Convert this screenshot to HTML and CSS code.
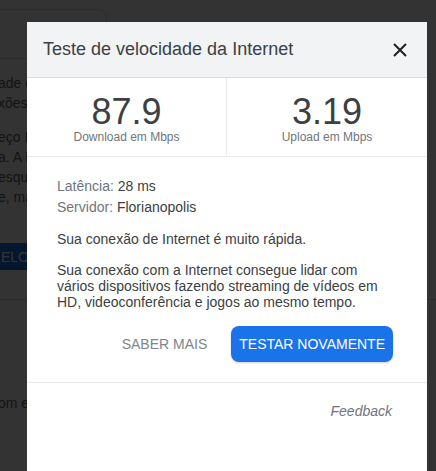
FILE: index.html
```html
<!DOCTYPE html>
<html lang="pt-BR">

<head>
    <meta charset="UTF-8">
    <meta name="viewport" content="width=device-width, initial-scale=1.0">
    <title>Teste de velocidade da Internet</title>
    <link rel="stylesheet" href="styles.css">
</head>

<body>
    <div class="page">
        <div class="search-box"></div>
        <p class="intro">ade da sua conexão em menos de 30 segundos.<br>xões são testadas com servidores próximos.</p>
        <p class="intro">eço IP é compartilhado com o provedor do teste<br>a. A M-Lab conduz o teste e publica todos os<br>esquisa. As informações publicadas incluem<br>e, mas não incluem informações sobre você.</p>
        <button class="run-button">ELOCIDADE</button>
        <div class="page-rule"></div>
        <p class="intro bottom">om este teste</p>
    </div>

    <div class="overlay"></div>

    <div class="dialog">
        <header class="dialog-header">
            <h1>Teste de velocidade da Internet</h1>
            <button class="close-btn" aria-label="Fechar">
                <svg width="14" height="14" viewBox="0 0 14 14">
                    <path d="M1 1 L13 13 M13 1 L1 13" stroke="#202124" stroke-width="2" fill="none" />
                </svg>
            </button>
        </header>

        <div class="stats">
            <div class="stat">
                <div class="stat-value">87.9</div>
                <div class="stat-label">Download em Mbps</div>
            </div>
            <div class="stat">
                <div class="stat-value">3.19</div>
                <div class="stat-label">Upload em Mbps</div>
            </div>
        </div>

        <div class="dialog-body">
            <div class="info-row"><span class="info-label">Latência:</span> 28 ms</div>
            <div class="info-row"><span class="info-label">Servidor:</span> Florianopolis</div>
            <p class="verdict">Sua conexão de Internet é muito rápida.</p>
            <p>Sua conexão com a Internet consegue lidar com vários dispositivos fazendo streaming de vídeos em HD, videoconferência e jogos ao mesmo tempo.</p>

            <div class="actions">
                <button class="text-btn">SABER MAIS</button>
                <button class="primary-btn">TESTAR NOVAMENTE</button>
            </div>
        </div>

        <div class="dialog-footer">
            <a href="#" class="feedback">Feedback</a>
        </div>
    </div>
</body>

</html>
```

FILE: styles.css
```css
html,
body {
    height: 100%;
    overflow: hidden;
}

body {
    font-family: "Liberation Sans", Arial, sans-serif;
    margin: 0;
    padding: 0;
    background-color: #fff;
    color: #3c4043;
}

/* page behind the dialog */
.page {
    margin-left: -2px;
    padding-top: 9px;
    font-size: 14px;
    color: #5f6368;
}

.search-box {
    margin-left: -21px;
    width: 130px;
    height: 50px;
    box-sizing: border-box;
    border: 1px solid #dadce0;
    border-radius: 8px;
}

.intro {
    margin: 14px 0 0;
    line-height: 20px;
    white-space: nowrap;
}

.intro.bottom {
    margin-top: 93px;
}

.run-button {
    display: block;
    margin: 36px 0 0 -10px;
    height: 27px;
    padding: 0 0 0 13px;
    width: 200px;
    text-align: left;
    border: none;
    border-radius: 4px;
    background-color: #1a73e8;
    color: #fff;
    font-family: inherit;
    font-size: 14px;
}

.page-rule {
    margin-top: 29px;
    height: 1px;
    background-color: #dadce0;
}

.overlay {
    position: fixed;
    top: 0;
    left: 0;
    right: 0;
    bottom: 0;
    background-color: rgba(0, 0, 0, 0.8);
}

/* dialog */
.dialog {
    position: fixed;
    top: 22px;
    left: 27px;
    width: 400px;
    bottom: -40px;
    background: #fff;
    display: flex;
    flex-direction: column;
}

.dialog-header {
    height: 55px;
    display: flex;
    align-items: center;
    justify-content: space-between;
    padding: 0 20px 0 16px;
    background-color: #f1f3f4;
    border-bottom: 1px solid #dadce0;
}

.dialog-header h1 {
    margin: 0;
    font-size: 18px;
    font-weight: normal;
    color: #3c4043;
}

.close-btn {
    display: flex;
    padding: 0;
    border: none;
    background: none;
    cursor: pointer;
}

.stats {
    display: grid;
    grid-template-columns: 1fr 1fr;
    border-bottom: 1px solid #ebebeb;
}

.stat {
    padding: 16px 0 12px;
    text-align: center;
}

.stat:first-child {
    border-right: 1px solid #ebebeb;
}

.stat-value {
    font-size: 36px;
    line-height: 36px;
    color: #3c4043;
}

.stat-label {
    font-size: 12px;
    line-height: 14px;
    color: #70757a;
}

.dialog-body {
    padding: 19px 34px 20px 30px;
    font-size: 14px;
    border-bottom: 1px solid #ebebeb;
}

.info-row {
    line-height: 21px;
    color: #3c4043;
}

.info-label {
    color: #70757a;
}

.dialog-body p {
    margin: 15px 0 0;
    line-height: 16px;
    color: #3c4043;
}

.dialog-body .verdict {
    margin-top: 13px;
}

.actions {
    display: flex;
    justify-content: flex-end;
    align-items: center;
    gap: 16px;
    margin-top: 16px;
}

.text-btn,
.primary-btn {
    height: 36px;
    padding: 0 8px;
    border: none;
    font-family: inherit;
    font-size: 14px;
    cursor: pointer;
}

.text-btn {
    background: none;
    color: #80868b;
}

.primary-btn {
    background-color: #1a73e8;
    color: #fff;
    border-radius: 8px;
    box-shadow: 0 1px 2px rgba(0, 0, 0, 0.2);
}

.dialog-footer {
    padding: 20px 35px 0 0;
    text-align: right;
    font-size: 14px;
    line-height: 16px;
}

.feedback {
    font-style: italic;
    color: #70757a;
    text-decoration: none;
}
```
